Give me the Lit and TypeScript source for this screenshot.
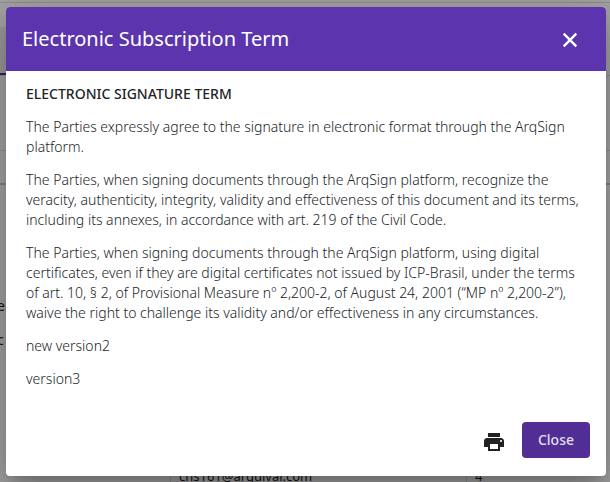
import { LitElement, html, css } from "lit";
import { customElement } from "lit/decorators.js";

/** The dimmed page that lies behind the dialog. */
@customElement("page-behind")
export class PageBehind extends LitElement {
  static styles = css`
    :host {
      display: flex;
      flex-direction: column;
      box-sizing: border-box;
      height: 100vh;
      overflow: hidden;
      background: #fff;
      color: #222;
      font: 400 14px/20px "Noto Sans", sans-serif;
    }
    .bar {
      height: 2px;
      border-bottom: 1px solid #ddd;
    }
    .tabs {
      display: flex;
      height: 72px;
      border-bottom: 1px solid #ddd;
    }
    .tab {
      width: 100px;
      margin-top: 24px;
      border-bottom: 2px solid #5c35ae;
      background: #f1f1f3;
    }
    .filter {
      height: 74px;
      border-bottom: 1px solid #ddd;
    }
    .head {
      height: 32px;
      border-bottom: 2px solid #ccc;
    }
    .labels {
      display: flex;
      flex-direction: column;
      gap: 14px;
      padding-top: 111px;
      flex: 1;
    }
    .label {
      margin-left: -3px;
    }
    .row {
      display: grid;
      grid-template-columns: 170px 296px 1fr;
      height: 18px;
      font-size: 13px;
      line-height: 24px;
    }
    .cell {
      padding-left: 8px;
    }
    .cell + .cell {
      border-left: 1px solid #ddd;
    }
  `;
  render() {
    return html`
      <div class="bar"></div>
      <div class="tabs"><div class="tab"></div></div>
      <div class="filter"></div>
      <div class="head"></div>
      <div class="labels">
        <div class="label">er</div>
        <div class="label">c</div>
      </div>
      <div class="row">
        <div class="cell"></div>
        <div class="cell">chs161@arquivar.com</div>
        <div class="cell">4</div>
      </div>
    `;
  }
}

const PARAGRAPHS = [
  "The Parties expressly agree to the signature in electronic format through the ArqSign platform.",
  "The Parties, when signing documents through the ArqSign platform, recognize the veracity, authenticity, integrity, validity and effectiveness of this document and its terms, including its annexes, in accordance with art. 219 of the Civil Code.",
  "The Parties, when signing documents through the ArqSign platform, using digital certificates, even if they are digital certificates not issued by ICP-Brasil, under the terms of art. 10, § 2, of Provisional Measure nº 2,200-2, of August 24, 2001 (“MP nº 2,200-2”), waive the right to challenge its validity and/or effectiveness in any circumstances.",
  "new version2",
  "version3",
];

@customElement("app-root")
export class AppRoot extends LitElement {
  static styles = css`
    :host {
      display: block;
      position: relative;
      height: 100vh;
      overflow: hidden;
      font: 300 14px/20px "Noto Sans", sans-serif;
      color: #212529;
    }
    .backdrop {
      position: absolute;
      inset: 0;
      box-sizing: border-box;
      padding: 7px 4px 6px 6px;
      background: rgba(0, 0, 0, 0.36);
    }
    .dialog {
      display: flex;
      flex-direction: column;
      box-sizing: border-box;
      min-height: 100%;
      border-radius: 4px;
      overflow: hidden;
      background: #fff;
      box-shadow:
        0 11px 15px -7px rgba(0, 0, 0, 0.2),
        0 24px 38px 3px rgba(0, 0, 0, 0.14),
        0 9px 46px 8px rgba(0, 0, 0, 0.12);
    }
    .header {
      display: flex;
      align-items: center;
      justify-content: space-between;
      height: 64px;
      padding: 0 24px 0 16px;
      background: #5c35ae;
      color: #fff;
    }
    .title {
      margin: 0;
      font-size: 20px;
      line-height: 28px;
      font-weight: 400;
    }
    button {
      display: flex;
      align-items: center;
      justify-content: center;
      padding: 0;
      border: 0;
      background: none;
      color: inherit;
      font: inherit;
    }
    svg {
      display: block;
      fill: currentColor;
    }
    .body {
      display: flex;
      flex-direction: column;
      gap: 13px;
      padding: 13px 20px;
    }
    .heading,
    .text {
      margin: 0;
      font-size: 14px;
      line-height: 20px;
    }
    .heading {
      font-weight: 500;
    }
    .footer {
      display: flex;
      align-items: center;
      justify-content: flex-end;
      gap: 16px;
      margin-top: auto;
      padding: 0 16px 18px;
    }
    .print {
      padding-top: 4px;
      color: #212121;
    }
    .close {
      width: 68px;
      height: 36px;
      border-radius: 4px;
      background: #512d96;
      color: #e4dff0;
      font-weight: 500;
    }
  `;
  render() {
    return html`
      <page-behind></page-behind>
      <div class="backdrop">
        <section class="dialog" role="dialog" aria-labelledby="title">
          <header class="header">
            <h1 class="title" id="title">Electronic Subscription Term</h1>
            <button aria-label="Close dialog">
              <svg width="24" height="24" viewBox="0 0 24 24">
                <path d="M5.7 6.7 18.3 19.3M18.3 6.7 5.7 19.3" stroke="currentColor" stroke-width="2.4" />
              </svg>
            </button>
          </header>
          <div class="body">
            <h2 class="heading">ELECTRONIC SIGNATURE TERM</h2>
            ${PARAGRAPHS.map((p) => html`<p class="text">${p}</p>`)}
          </div>
          <footer class="footer">
            <button class="print" aria-label="Print">
              <svg width="24" height="24" viewBox="0 0 24 24">
                <path d="M19 8H5c-1.66 0-3 1.34-3 3v6h4v4h12v-4h4v-6c0-1.66-1.34-3-3-3zm-3 11H8v-5h8v5zm3-7c-.55 0-1-.45-1-1s.45-1 1-1 1 .45 1 1-.45 1-1 1zm-1-9H6v4h12V3z" />
              </svg>
            </button>
            <button class="close">Close</button>
          </footer>
        </section>
      </div>
    `;
  }
}
